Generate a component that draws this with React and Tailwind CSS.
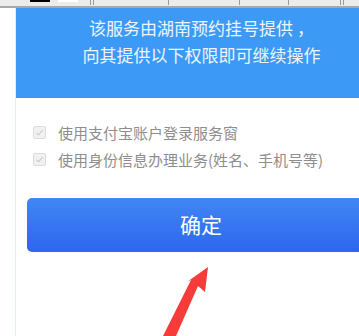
const Ruler = () => (
  <svg width="359" height="8" className="block">
    <rect x="0" y="0" width="359" height="6" fill="#ececec" />
    <rect x="0" y="6" width="359" height="2" fill="#a8a8a8" />
    <rect x="30" y="0" width="20" height="2" fill="#000" />
    <rect x="58" y="0" width="20" height="2" fill="#fff" />
    {[90, 93, 168, 239, 288, 340, 343].map((x) => (
      <rect key={x} x={x} y="0" width="1" height="5" fill="#9a9a9a" />
    ))}
  </svg>
);

const Check = () => (
  <span className="w-[13px] h-[13px] rounded-[2px] border border-[#dcdcdc] bg-[#f1f1f1] flex items-center justify-center shrink-0">
    <svg width="9" height="9" viewBox="0 0 9 9">
      <path d="M1.5 4.8 L3.6 6.8 L7.6 2.2" fill="none" stroke="#c8c8c8" strokeWidth="1.1" />
    </svg>
  </span>
);

const App = () => {
  return (
    <div
      className="relative w-[359px] h-[336px] overflow-hidden bg-white"
      style={{ fontFamily: '"Noto Sans CJK SC", "Noto Sans", sans-serif' }}
    >
      <Ruler />

      <div className="ml-[15px] w-[372px] h-[328px] border-l border-[#e6edf7]">

        <div className="h-[90px] bg-[#3d99f6] pt-[6px] text-center text-[17px] leading-[27px] text-white/90">
          <p>该服务由湖南预约挂号提供 ，</p>
          <p>向其提供以下权限即可继续操作</p>
        </div>

        <div className="pt-[21px] pl-[17px] text-[15px] leading-[27px] text-[#8e8e8e]">
          <div className="flex items-center gap-[12px]">
            <Check />
            <span>使用支付宝账户登录服务窗</span>
          </div>
          <div className="flex items-center gap-[12px]">
            <Check />
            <span>使用身份信息办理业务(姓名、手机号等)</span>
          </div>
        </div>

        <button className="mt-[25px] ml-[11px] w-[348px] h-[54px] rounded-[5px] bg-gradient-to-b from-[#4186f5] to-[#2e66ee] text-white text-[21px] flex items-center justify-center">
          确定
        </button>

      </div>

      <svg
        className="absolute left-0 top-0"
        width="359"
        height="336"
        viewBox="0 0 359 336"
      >
        <path
          d="M208 267 L205 292 L198 286 L176 336 L163 336 L191 280 L187 282 Z"
          fill="#f63b38"
        />
      </svg>
    </div>
  );
};

export default App;
